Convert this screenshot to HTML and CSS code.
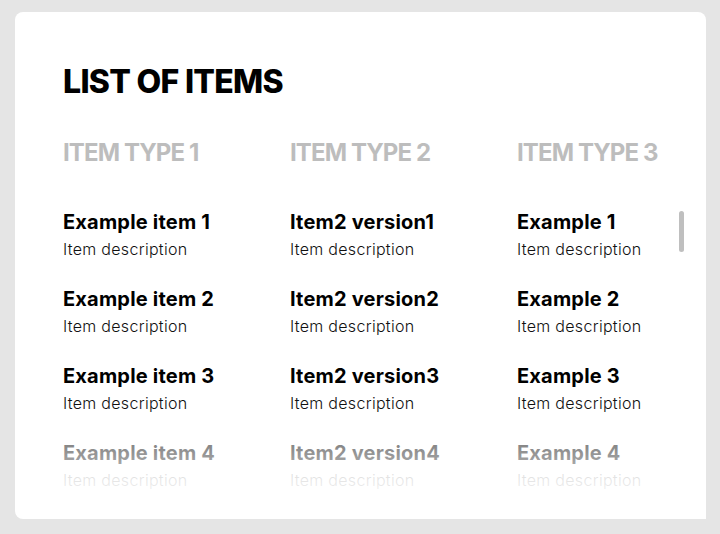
FILE: index.html
```html
<!DOCTYPE html>
<html>
<head>
<meta charset="utf-8">
<link rel="stylesheet" href="styles.css">
</head>
<body>
<div class="card">
  <h1 class="title">LIST OF ITEMS</h1>
  <div class="headers">
    <div class="head">ITEM TYPE 1</div>
    <div class="head">ITEM TYPE 2</div>
    <div class="head">ITEM TYPE 3</div>
  </div>
  <div class="scroller">
    <div class="grid">
      <div class="item"><div class="name">Example item 1</div><div class="desc">Item description</div></div>
      <div class="item"><div class="name">Item2 version1</div><div class="desc">Item description</div></div>
      <div class="item"><div class="name">Example 1</div><div class="desc">Item description</div></div>
      <div class="item"><div class="name">Example item 2</div><div class="desc">Item description</div></div>
      <div class="item"><div class="name">Item2 version2</div><div class="desc">Item description</div></div>
      <div class="item"><div class="name">Example 2</div><div class="desc">Item description</div></div>
      <div class="item"><div class="name">Example item 3</div><div class="desc">Item description</div></div>
      <div class="item"><div class="name">Item2 version3</div><div class="desc">Item description</div></div>
      <div class="item"><div class="name">Example 3</div><div class="desc">Item description</div></div>
      <div class="item"><div class="name">Example item 4</div><div class="desc">Item description</div></div>
      <div class="item"><div class="name">Item2 version4</div><div class="desc">Item description</div></div>
      <div class="item"><div class="name">Example 4</div><div class="desc">Item description</div></div>
    </div>
    <div class="fade"></div>
    <div class="thumb"></div>
  </div>
</div>
</body>
</html>
```

FILE: styles.css
```css
html, body {
  margin: 0;
  padding: 0;
  background: #e5e5e5;
}
body {
  font-family: "Inter", "Liberation Sans", sans-serif;
  width: 720px;
  height: 534px;
  overflow: hidden;
}
.card {
  box-sizing: border-box;
  margin: 12px 14px 0 15px;
  height: 507px;
  background: #ffffff;
  border-radius: 8px;
  padding: 50px 0 0 48px;
  display: flex;
  flex-direction: column;
}
.title {
  margin: 0;
  font-size: 32px;
  line-height: 40px;
  font-weight: 800;
  color: #000;
  letter-spacing: -0.7px;
}
.headers {
  margin-top: 36px;
  display: grid;
  grid-template-columns: 227px 227px 227px;
}
.head {
  font-size: 24px;
  line-height: 30px;
  font-weight: 700;
  color: #bdbdbd;
  letter-spacing: -0.9px;
}
.scroller {
  position: relative;
  margin-top: 42px;
  flex: 1;
  overflow: hidden;
}
.grid {
  display: grid;
  grid-template-columns: 227px 227px 227px;
  row-gap: 27px;
}
.item {
  display: flex;
  flex-direction: column;
}
.name {
  font-size: 20px;
  line-height: 24px;
  font-weight: 700;
  color: #000;
  letter-spacing: 0.2px;
}
.desc {
  margin-top: 4px;
  font-size: 16px;
  line-height: 22px;
  font-weight: 300;
  color: #111;
  letter-spacing: 0.3px;
}
.fade {
  position: absolute;
  left: 0;
  right: 0;
  top: 231px;
  height: 80px;
  background: linear-gradient(to bottom,
    rgba(255,255,255,0.5) 0px,
    rgba(255,255,255,0.66) 24px,
    rgba(255,255,255,0.86) 30px,
    rgba(255,255,255,0.93) 50px,
    #fff 60px);
}
.thumb {
  position: absolute;
  left: 616px;
  top: 1px;
  width: 5px;
  height: 41px;
  border-radius: 3px;
  background: #bfbfbf;
}
```
